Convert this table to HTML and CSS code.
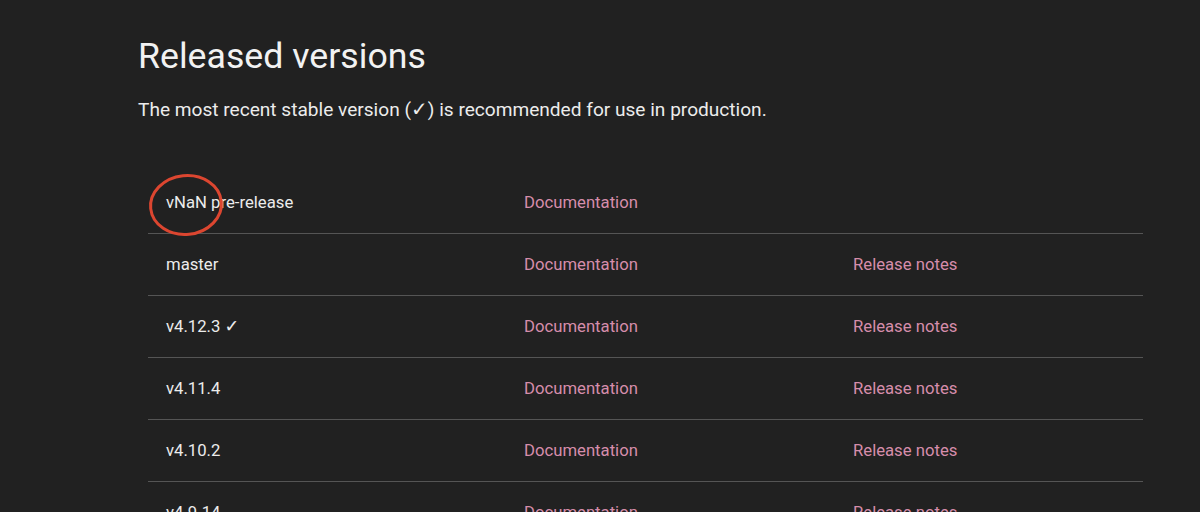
FILE: index.html
```html
<!DOCTYPE html>
<html lang="en">
<head>
    <meta charset="UTF-8">
    <meta name="viewport" content="width=device-width, initial-scale=1.0">
    <title>Released versions</title>
    <link rel="stylesheet" href="styles.css">
</head>
<body>
    <main class="content">
        <h1>Released versions</h1>
        <p class="intro">The most recent stable version (<span class="check">✓</span>) is recommended for use in production.</p>

        <table class="versions">
            <tr>
                <td class="version">
                    <span class="marked">vNaN
                        <svg class="circle" width="80" height="66" viewBox="0 0 80 66">
                            <ellipse cx="40" cy="33" rx="35.5" ry="29.5" fill="none" stroke="#dc4630" stroke-width="3" transform="rotate(-6 40 33)"/>
                        </svg>
                    </span> pre-release
                </td>
                <td><a href="#">Documentation</a></td>
                <td></td>
            </tr>
            <tr>
                <td class="version">master</td>
                <td><a href="#">Documentation</a></td>
                <td><a href="#">Release notes</a></td>
            </tr>
            <tr>
                <td class="version">v4.12.3 <span class="check">✓</span></td>
                <td><a href="#">Documentation</a></td>
                <td><a href="#">Release notes</a></td>
            </tr>
            <tr>
                <td class="version">v4.11.4</td>
                <td><a href="#">Documentation</a></td>
                <td><a href="#">Release notes</a></td>
            </tr>
            <tr>
                <td class="version">v4.10.2</td>
                <td><a href="#">Documentation</a></td>
                <td><a href="#">Release notes</a></td>
            </tr>
            <tr>
                <td class="version">v4.9.14</td>
                <td><a href="#">Documentation</a></td>
                <td><a href="#">Release notes</a></td>
            </tr>
            <tr>
                <td class="version">v4.8.2</td>
                <td><a href="#">Documentation</a></td>
                <td><a href="#">Release notes</a></td>
            </tr>
        </table>
    </main>
</body>
</html>
```

FILE: styles.css
```css
body {
    margin: 0;
    background: #212121;
    color: #ececec;
    font-family: Roboto, "Liberation Sans", sans-serif;
}

.content {
    width: 1005px;
    padding: 36px 0 40px 138px;
}

h1 {
    font-size: 35.7px;
    font-weight: 400;
    line-height: 40px;
    margin: 0 0 22px;
    color: #f2f2f2;
}

.intro {
    font-size: 19.1px;
    line-height: 24px;
    margin: 0;
}

.check {
    font-family: "DejaVu Sans", sans-serif;
    font-weight: bold;
    font-size: 1.05em;
    line-height: 1;
}

.versions {
    margin: 50px 0 0 10px;
    width: 995px;
    border-collapse: collapse;
    font-size: 16.7px;
    line-height: 24px;
}

.versions td {
    padding: 19px 18px 18px;
    border-bottom: 1px solid #555;
    vertical-align: top;
}

.versions td:nth-child(1) {
    width: 322px;
}

.versions td:nth-child(2) {
    width: 293px;
}

.versions a {
    color: #d68dab;
    text-decoration: none;
}

.marked {
    position: relative;
}

.circle {
    position: absolute;
    left: -20px;
    top: -21px;
}
```
